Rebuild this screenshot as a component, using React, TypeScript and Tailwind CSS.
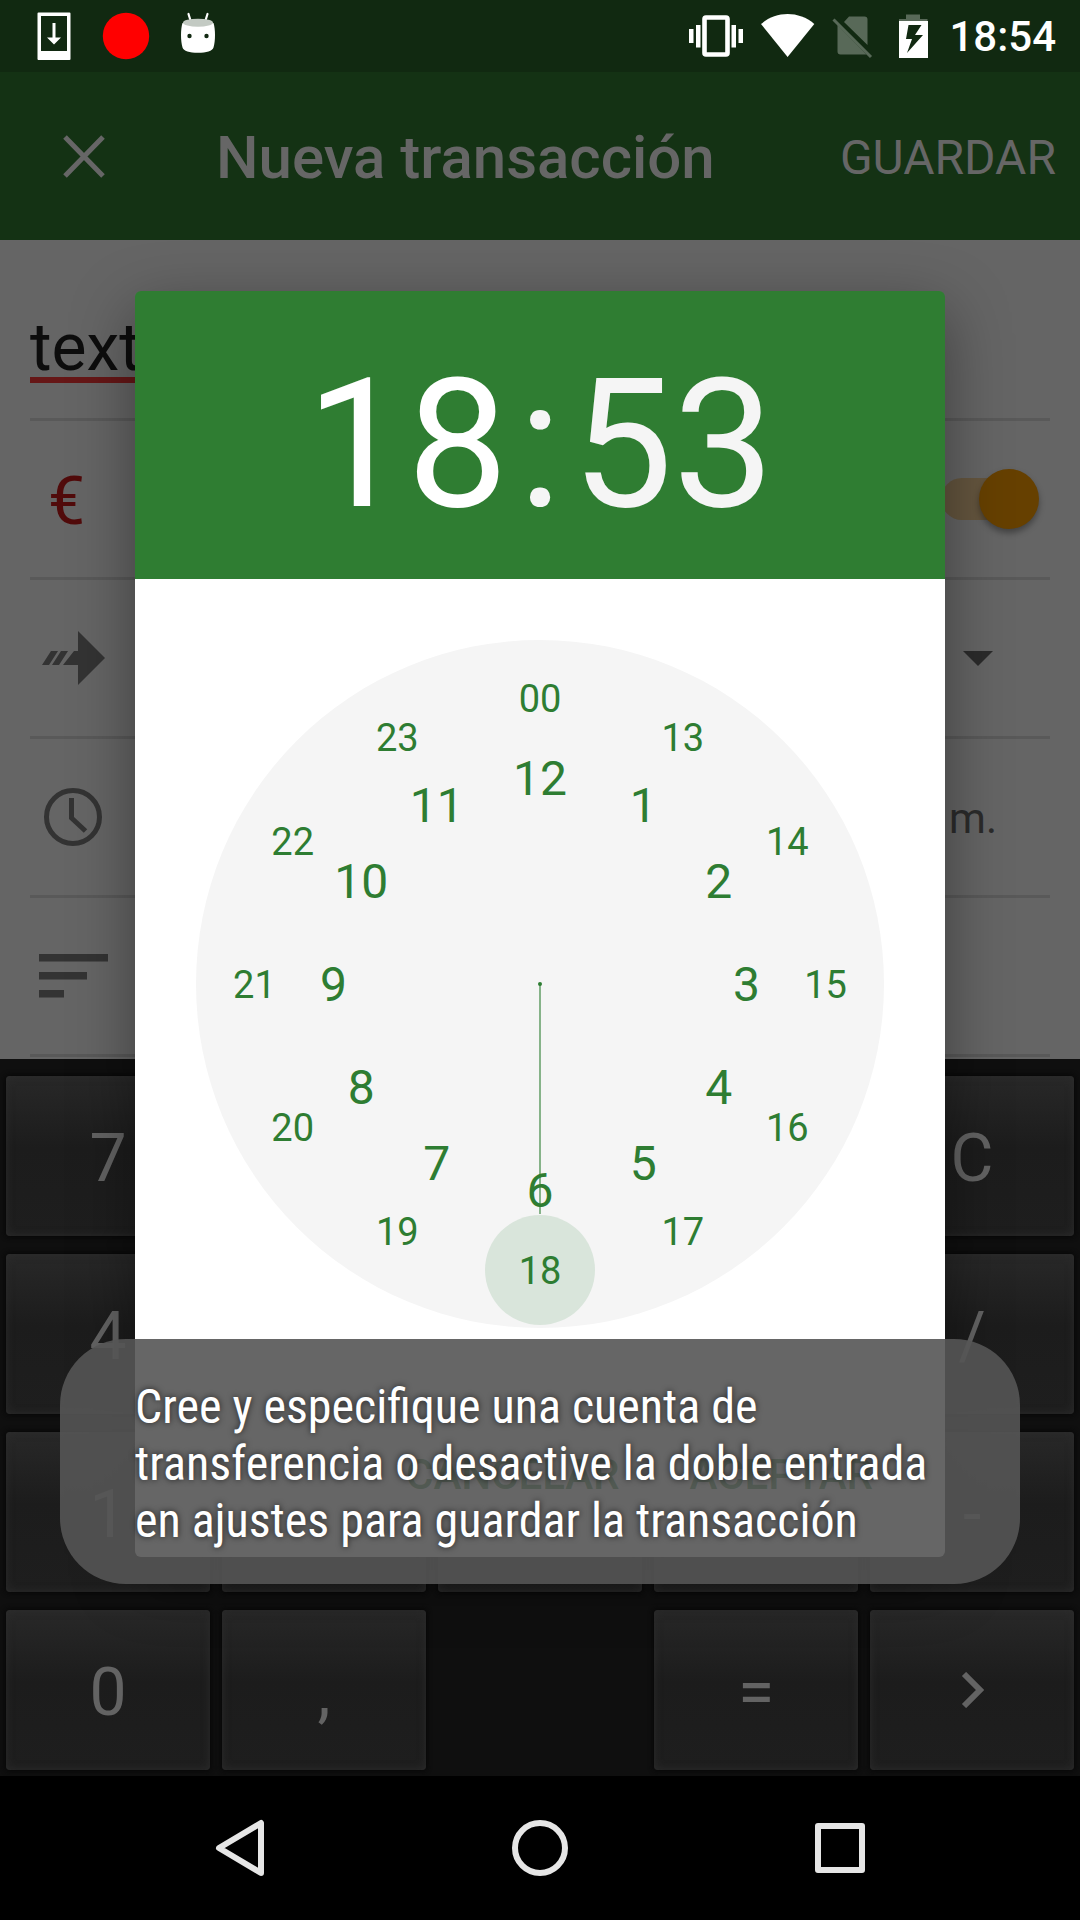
import React from "react";

const OUTER = ["00", "13", "14", "15", "16", "17", "18", "19", "20", "21", "22", "23"];
const INNER = ["12", "1", "2", "3", "4", "5", "6", "7", "8", "9", "10", "11"];

const KEYS: (string | null)[] = [
  "7", "", "", "", "C",
  "4", "", "", "", "/",
  "1", "", "", "", "-",
  "0", ",", null, "=", ">",
];

function place(index: number, radius: number): React.CSSProperties {
  const angle = (index * Math.PI) / 6;
  return {
    left: `${50 + radius * Math.sin(angle)}%`,
    top: `${50 - radius * Math.cos(angle)}%`,
  };
}

function StatusBar() {
  return (
    <div className="flex h-[72px] items-center justify-between bg-[#112911] pr-6 pl-[30px] text-white">
      <svg className="h-[72px] w-[200px]" viewBox="30 0 200 72" aria-hidden="true">
        <path fill="#fff" fillRule="evenodd" d="M38.500 12.500h31a1 1 0 0 1 1 1v45.500a1 1 0 0 1-1 1h-31a1 1 0 0 1-1-1v-45.500a1 1 0 0 1 1-1zM41 16v35h26v-35z" />
        <path fill="#fff" d="M52.500 23h3v14.500h5.500l-7 7-7-7h5.500z" />
        <circle cx="126" cy="36" r="23.200" fill="red" />
        <path stroke="#fff" strokeWidth="2.200" strokeLinecap="round" d="M188.500 14l2.200 7M207.500 14l-2.200 7" />
        <path fill="#fff" d="M182.500 23c-2 6-2 18 0 24.500 1 3.500 7 5.300 15.500 5.300s14.500-1.800 15.500-5.300c2-6.500 2-18.500 0-24.500z" />
        <ellipse cx="198" cy="22.700" rx="15" ry="4" fill="#c3cac3" />
        <circle cx="189.500" cy="36" r="2.200" fill="#112911" />
        <circle cx="206.500" cy="36" r="2.200" fill="#112911" />
      </svg>
      <div className="flex items-center">
        <svg className="h-[72px] w-[260px]" viewBox="680 0 260 72" aria-hidden="true">
          <rect x="704.500" y="17.500" width="23" height="37" rx="1.500" fill="none" stroke="#fff" strokeWidth="4.600" />
          <path fill="#fff" d="M689 29h4.500v14h-4.500zM696 25h4.500v22.500h-4.500zM731.500 25h4.500v22.500h-4.500zM738.500 29h4.500v14h-4.500z" />
          <path fill="#fff" d="M761 24c15.500-13.200 37.800-13.200 53.300 0l-26.700 33z" />
          <path fill="#586958" d="M844 22l5-5.500h15.500a3 3 0 0 1 3 3v25.500zM837.500 25l29 29.500h-26a3 3 0 0 1-3-3z" />
          <path stroke="#586958" strokeWidth="3" d="M833.500 19.500l37.500 37.500" />
          <path fill="#586958" d="M906 14.500h14v4.500h7.500v2h-28.500v-2h7z" />
          <path fill="#fff" fillRule="evenodd" d="M899 21h29v37h-29zM908.500 25l-2.500 14h6l-5 14 16-18h-8l6.500-10z" />
        </svg>
        <span className="ml-[9px] pt-0.5 text-[42px] leading-none font-medium">18:54</span>
      </div>
    </div>
  );
}

function Toolbar() {
  return (
    <header className="flex h-[168px] items-center bg-[#143214] pt-1 pr-6 pl-[60px] text-[#666]">
      <button type="button" aria-label="Cerrar" className="w-[156px]">
        <svg className="size-12" viewBox="0 0 48 48" stroke="currentColor" strokeWidth="5" aria-hidden="true">
          <path d="M5 3l38 39M43 3l-38 39" />
        </svg>
      </button>
      <h1 className="grow text-[60px] leading-none font-medium">Nueva transacción</h1>
      <button type="button" className="text-[48px] leading-none">GUARDAR</button>
    </header>
  );
}

function Row({ children }: { children: React.ReactNode }) {
  return (
    <div className="flex h-[159px] items-center justify-between border-b-3 border-[#595959]">{children}</div>
  );
}

function Form() {
  return (
    <main className="h-[819px] overflow-hidden bg-[#656565] px-[30px]">
      <div className="flex h-[181px] items-end border-b-3 border-[#595959] pb-[35px]">
        <input
          aria-label="Descripción"
          defaultValue="text"
          className="h-20 w-[120px] border-b-6 border-[#661717] pt-3.5 text-[66px] leading-none text-[#0d0d0d] outline-none"
        />
      </div>
      <Row>
        <span className="w-[87px] pt-1.5 pl-[18px] text-[66px] leading-none text-[#510b0b]">€</span>
        <label className="relative mr-[11px] flex h-[60px] w-[98px] items-center">
          <input type="checkbox" role="switch" defaultChecked aria-label="Tipo de transacción" className="peer sr-only" />
          <span className="h-[42px] w-[84px] rounded-full bg-[#65563f]" />
          <span className="absolute right-0 size-[60px] rounded-full bg-[#664000] shadow-[0_4px_6px_rgba(0,0,0,0.35)]" />
        </label>
      </Row>
      <Row>
        <svg className="ml-3 h-[54px] w-[63px]" viewBox="0 0 63 54" fill="#333" aria-hidden="true">
          <path d="M36 0l27 27-27 27v-20h-15l11-14h4zM0 34l9-14h7l-9 14zM10 34l9-14h7l-9 14z" />
        </svg>
        <button type="button" aria-label="Elegir cuenta" className="mr-[57px]">
          <svg className="h-[15px] w-[30px]" viewBox="0 0 30 15" fill="#2b2b2b" aria-hidden="true">
            <path d="M0 0h30l-15 15z" />
          </svg>
        </button>
      </Row>
      <Row>
        <svg className="ml-[13px] size-[60px]" viewBox="0 0 60 60" fill="none" stroke="#333" strokeWidth="5" aria-hidden="true">
          <circle cx="30" cy="30" r="26.500" />
          <path d="M28.500 11v20l14 13" />
        </svg>
        <span className="mr-[53px] pt-0.5 text-[42px] text-[#2b2b2b]">m.</span>
      </Row>
      <Row>
        <svg className="ml-[9px] h-[45px] w-[69px]" viewBox="0 0 69 45" fill="#333" aria-hidden="true">
          <path d="M0 0h69v7.500h-69zM0 18h48v7.500h-48zM0 36h25v7.500h-25z" />
        </svg>
      </Row>
    </main>
  );
}

function Keypad() {
  return (
    <div className="grid grid-cols-5 gap-x-3 gap-y-[18px] bg-[#0f0f0f] px-1.5 pt-[17px] pb-1.5">
      {KEYS.map((key, i) =>
        key === null ? (
          <span key={i} />
        ) : (
          <button
            key={i}
            type="button"
            aria-label={key || `Tecla ${i + 1}`}
            className="flex h-40 items-center justify-center rounded-[4px] bg-linear-to-b from-[#282828] via-[#1c1c1c] via-45% to-[#1e1e1e] text-[66px] leading-none text-[#636363] shadow-[inset_0_0_8px_#2d2d2d,0_0_4px_2px_#090909]"
          >
            {key === ">" ? (
              <svg className="h-9 w-6" viewBox="0 0 24 36" fill="none" stroke="currentColor" strokeWidth="6" aria-hidden="true">
                <path d="M4 2l16 16-16 16" />
              </svg>
            ) : (
              <span className="pt-1.5">{key}</span>
            )}
          </button>
        ),
      )}
    </div>
  );
}

function NavBar() {
  return (
    <nav className="grid h-36 grid-cols-3 place-items-center bg-black px-[90px]">
      <button type="button" aria-label="Atrás">
        <svg className="size-[60px]" viewBox="0 0 60 60" fill="none" stroke="#e6e6e6" strokeWidth="6" strokeLinejoin="round" aria-hidden="true">
          <path d="M51 5v50l-42-25z" />
        </svg>
      </button>
      <button type="button" aria-label="Inicio">
        <svg className="size-[60px]" viewBox="0 0 60 60" fill="none" stroke="#e6e6e6" strokeWidth="6" aria-hidden="true">
          <circle cx="30" cy="30" r="25" />
        </svg>
      </button>
      <button type="button" aria-label="Recientes">
        <svg className="size-[60px]" viewBox="0 0 60 60" fill="none" stroke="#e6e6e6" strokeWidth="6" strokeLinejoin="round" aria-hidden="true">
          <rect x="8" y="8" width="44" height="44" />
        </svg>
      </button>
    </nav>
  );
}

function TimeDialog() {
  return (
    <div className="absolute inset-x-0 top-[72px] bottom-36 flex items-center justify-center">
      <div role="dialog" aria-label="Hora" className="w-3/4 rounded-[6px] text-[#2e7d32] shadow-[0_20px_64px_rgba(0,0,0,0.4)]">
        <div className="flex h-72 items-center justify-center gap-2.5 rounded-t-[6px] bg-[#2f7d32] pt-5 text-[180px] leading-none text-[#f5f5f5]">
          <button type="button" className="text-white">18</button>
          <span>:</span>
          <button type="button">53</button>
        </div>
        <div className="rounded-b-[6px] bg-white pt-[61px]">
          <div className="relative mx-[61px] aspect-square rounded-full bg-[#f5f5f5]">
            <span className="absolute top-[91.500%] left-1/2 size-[110px] -translate-1/2 rounded-full bg-[#d9e5db]" />
            <span className="absolute top-1/2 left-1/2 h-[33.500%] w-0.5 -translate-x-1/2 bg-[#86b389]" />
            <span className="absolute top-1/2 left-1/2 size-1 -translate-1/2 rounded-full bg-[#2e7d32]" />
            {OUTER.map((n, i) => (
              <button key={n} type="button" className="absolute -translate-1/2 pt-0.5 text-[38px] leading-none" style={place(i, 41.5)}>
                {n}
              </button>
            ))}
            {INNER.map((n, i) => (
              <button key={n} type="button" className="absolute -translate-1/2 pt-0.5 text-[48px] leading-none" style={place(i, 30)}>
                {n}
              </button>
            ))}
          </div>
          <div className="flex items-center justify-end gap-[70px] pt-[92px] pr-[72px] pb-[29px] text-[42px] font-medium">
            <button type="button" className="h-[108px]">CANCELAR</button>
            <button type="button" className="h-[108px]">ACEPTAR</button>
          </div>
        </div>
      </div>
    </div>
  );
}

function Toast() {
  return (
    <div
      role="status"
      className="absolute inset-x-[60px] bottom-[336px] rounded-[66px] bg-[#555]/90 pt-[39px] pb-[35px] pl-[75px] font-['Roboto_Condensed','Roboto',sans-serif] text-[48px] leading-[57px] whitespace-nowrap text-white [text-shadow:0_0_6px_rgba(0,0,0,0.7)]"
    >
      Cree y especifique una cuenta de
      <br />
      transferencia o desactive la doble entrada
      <br />
      en ajustes para guardar la transacción
    </div>
  );
}

export default function App() {
  return (
    <div className="relative flex min-h-screen flex-col overflow-hidden bg-black font-['Roboto',sans-serif]">
      <StatusBar />
      <Toolbar />
      <Form />
      <Keypad />
      <NavBar />
      <TimeDialog />
      <Toast />
    </div>
  );
}
